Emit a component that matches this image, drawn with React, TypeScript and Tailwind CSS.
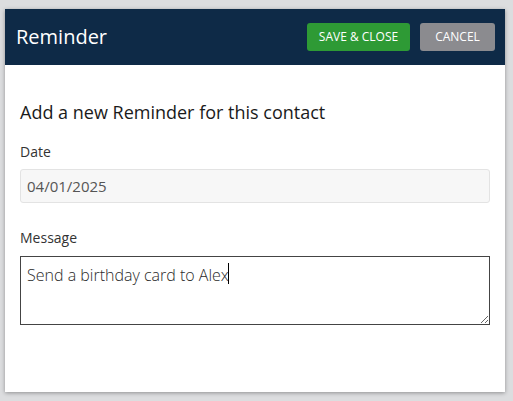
import React, { useEffect, useRef } from "react";

export default function App() {
  return (
    <div
      className="w-[513px] h-[401px] bg-[#dcdddf] pt-[9px] pl-[5px] overflow-hidden"
      style={{ fontFamily: '"Open Sans", "Noto Sans", sans-serif' }}
    >
      <div className="w-[500px] h-[383px] bg-white shadow-[0_1px_4px_rgba(0,0,0,0.35)] flex flex-col">
        <Header />
        <ReminderForm />
      </div>
    </div>
  );
}

function Header() {
  return (
    <div className="h-[56px] bg-[#0e2a47] flex items-center justify-between pl-[11px] pr-[10px]">
      <h1 className="text-[20px] text-white">Reminder</h1>
      <div className="flex items-center gap-[10px]">
        <button className="h-[28px] w-[103px] rounded-[3px] bg-[#2e9a35] text-white text-[12px] font-medium">
          SAVE &amp; CLOSE
        </button>
        <button className="h-[28px] w-[75px] rounded-[3px] bg-[#8b8b8f] text-white text-[12px] font-medium">
          CANCEL
        </button>
      </div>
    </div>
  );
}

function ReminderForm() {
  const messageRef = useRef<HTMLTextAreaElement>(null);

  // put the caret after the text, like the user just typed it
  useEffect(() => {
    const el = messageRef.current;
    if (!el) return;
    el.focus();
    el.setSelectionRange(el.value.length, el.value.length);
  }, []);

  return (
    <div className="px-[15px] pt-[35px]">
      <h2 className="text-[18px] text-[#1a1a1a] leading-[24px]">
        Add a new Reminder for this contact
      </h2>
      <label className="block mt-[18px] text-[14px] text-[#333] leading-[20px]">Date</label>
      <input
        readOnly
        value="04/01/2025"
        className="mt-[7px] w-[470px] h-[34px] px-[6px] bg-[#f7f7f7] border border-[#e3e3e3] rounded-[3px] text-[15px] text-[#555] outline-none"
      />
      <label className="block mt-[25px] text-[14px] text-[#333] leading-[20px]">Message</label>
      <div className="relative mt-[8px]">
        <textarea
          ref={messageRef}
          defaultValue="Send a birthday card to Alex"
          className="block w-[470px] h-[69px] px-[6px] pt-[7px] pb-[4px] border border-[#444] text-[16px] font-light text-[#2a2a2a] leading-[22px] outline-none caret-transparent"
        />
        {/* static caret so the screenshot shows it */}
        <span className="absolute left-[208px] top-[7px] w-px h-[21px] bg-black pointer-events-none" />
      </div>
    </div>
  );
}
